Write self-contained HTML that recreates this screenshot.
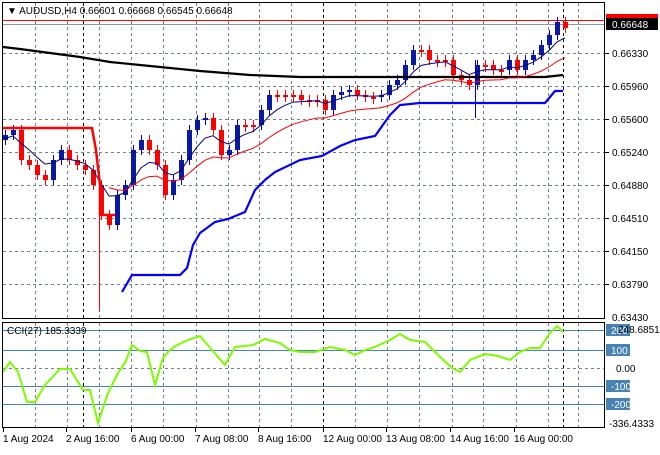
<!DOCTYPE html><html><head><style>
body{margin:0;background:#fff;width:660px;height:450px;overflow:hidden;font-family:"Liberation Sans",sans-serif}
svg text{font-family:"Liberation Sans",sans-serif;font-size:10px;fill:#000}
</style></head><body>
<svg id="s" width="660" height="450" xmlns="http://www.w3.org/2000/svg">
<rect x="0" y="0" width="660" height="450" fill="#fff"/>
<g id="grid"></g>
<g id="plot"></g>
<rect x="2.5" y="2.5" width="602" height="316" fill="none" stroke="#000"/>
<rect x="2.5" y="322.5" width="602" height="105" fill="none" stroke="#000"/>
<text x="7" y="14" font-size="10">▼ AUDUSD,H4  0.66601 0.66668 0.66545 0.66648</text>
<g id="axis"></g>
<text x="7" y="334">CCI(27) 185.3339</text>
</svg>
<script>
var NS="http://www.w3.org/2000/svg",g=document.getElementById('grid'),p=document.getElementById('plot'),ax=document.getElementById('axis');
function el(par,t,a){var e=document.createElementNS(NS,t);for(var k in a)e.setAttribute(k,a[k]);par.appendChild(e);return e}
var vx=[35,67,99,131,163,196,228,259,291,355,387,419,452,483,516,548,578];
vx.forEach(function(x){el(g,'line',{x1:x+.5,y1:3,x2:x+.5,y2:318,stroke:'#708090','stroke-dasharray':'3,3'});el(g,'line',{x1:x+.5,y1:323,x2:x+.5,y2:427,stroke:'#708090','stroke-dasharray':'3,3'})});
[83,323,563].forEach(function(x){el(g,'line',{x1:x+.5,y1:3,x2:x+.5,y2:318,stroke:'#000','stroke-dasharray':'3,3'});el(g,'line',{x1:x+.5,y1:323,x2:x+.5,y2:427,stroke:'#000','stroke-dasharray':'3,3'})});
var hy=[53,86,119,152,185,218,251,284],hl=['0.66330','0.65960','0.65600','0.65240','0.64880','0.64510','0.64150','0.63790'];
hy.forEach(function(y,i){el(g,'line',{x1:3,y1:y+.5,x2:604,y2:y+.5,stroke:'#708090','stroke-dasharray':'3,3'});el(ax,'line',{x1:605,y1:y+.5,x2:609,y2:y+.5,stroke:'#000'});var t=el(ax,'text',{x:612,y:y+4});t.textContent=hl[i]});
var t=el(ax,'text',{x:612,y:321});t.textContent='0.63430';
el(g,'line',{x1:3,y1:20.5,x2:604,y2:20.5,stroke:'#f00'});
el(g,'line',{x1:3,y1:24.5,x2:604,y2:24.5,stroke:'#8899aa'});
el(ax,'rect',{x:606,y:14,width:52,height:8,fill:'#f00'});
el(ax,'rect',{x:606,y:18,width:52,height:12,fill:'#000'});
t=el(ax,'text',{x:612,y:28,fill:'#fff',style:'fill:#fff'});t.textContent='0.66648';
// CCI levels
[[330,'200'],[350,'100'],[386,'-100'],[404,'-200']].forEach(function(a){el(g,'line',{x1:3,y1:a[0]+.5,x2:604,y2:a[0]+.5,stroke:'#4682b4'});el(ax,'rect',{x:606,y:a[0]-6,width:24,height:12,fill:'#4682b4'});var t=el(ax,'text',{x:611,y:a[0]+4,style:'fill:#fff'});t.textContent=a[1]});
el(g,'line',{x1:3,y1:368.5,x2:604,y2:368.5,stroke:'#708090','stroke-dasharray':'3,3'});
t=el(ax,'text',{x:616,y:372});t.textContent='0.00';
t=el(ax,'text',{x:618,y:333});t.textContent='248.6851';
t=el(ax,'text',{x:609,y:427});t.textContent='-336.4333';
[[3,'1 Aug 2024'],[66,'2 Aug 16:00'],[131,'6 Aug 00:00'],[195,'7 Aug 08:00'],[258,'8 Aug 16:00'],[323,'12 Aug 00:00'],[386,'13 Aug 08:00'],[450,'14 Aug 16:00'],[514,'16 Aug 00:00']].forEach(function(a){el(ax,'line',{x1:a[0]+.5,y1:428,x2:a[0]+.5,y2:432,stroke:'#000'});var t=el(ax,'text',{x:a[0],y:442});t.textContent=a[1]});
// candles
var c=[135,130,160,165,175,180,160,150,160,165,170,185,215,225,195,185,150,140,150,165,195,180,160,130,120,118,130,155,150,125,125,125,110,95,95,95,95,100,100,100,110,95,92,90,95,97,97,95,85,80,65,50,50,60,60,60,75,80,85,65,65,70,70,60,70,60,55,45,35,22,28];
var o=140;
c.forEach(function(cl,i){var x=5+i*8;var up=cl<o;var top=Math.min(o,cl),bot=Math.max(o,cl);if(bot-top<2)bot=top+2;var col=up?'#0a1aa0':'#f00';
el(p,'line',{x1:x+.5,y1:top-5,x2:x+.5,y2:bot+5,stroke:up?'#0000cd':'#f00'});
el(p,'rect',{x:x-2,y:top,width:5,height:bot-top,fill:col});o=cl});
el(p,'line',{x1:99.5,y1:200,x2:99.5,y2:311,stroke:'#f00'});
el(p,'line',{x1:475.5,y1:60,x2:475.5,y2:118,stroke:'#0000cd'});
function pl(pts,col,w){el(p,'polyline',{points:pts.map(function(a){return a.join(',')}).join(' '),fill:'none',stroke:col,'stroke-width':w})}
pl([[3,47],[20,49],[50,53],[80,57],[110,62],[140,65],[170,68],[200,71],[250,75],[300,77],[330,77],[400,77],[500,77],[545,77],[563,75]],'#000',2.2);
// blue thin ma
var bm=[],s=140;c.forEach(function(v,i){s=s*0.7+v*0.3;bm.push([5+i*8,s.toFixed(1)])});pl(bm,'#000080',1);
var rm=[],r=150;c.forEach(function(v,i){r=r*0.85+v*0.15;if(i>12)rm.push([5+i*8,(r+8).toFixed(1)])});pl(rm,'#f00',1);
pl([[3,128],[92,128],[96,150],[100,185],[100,215],[115,215]],'#f00',2.5);
pl([[122,292],[132,275],[180,275],[187,268],[193,245],[200,233],[215,222],[228,219],[245,212],[255,190],[265,180],[275,172],[300,160],[322,156],[340,146],[355,140],[375,136],[390,115],[400,105],[420,103],[545,103],[555,91],[563,91]],'#0000ff',2.2);
pl([[3,372],[10,362],[18,372],[27,402],[35,402],[45,385],[60,369],[70,369],[83,390],[90,390],[98,423],[108,393],[118,373],[125,363],[132,345],[140,351],[147,352],[155,385],[163,358],[170,350],[177,345],[188,340],[200,336],[212,350],[225,365],[235,347],[245,346],[253,345],[265,339],[280,343],[290,350],[300,352],[315,352],[330,347],[345,350],[355,355],[365,350],[375,347],[390,340],[400,334],[410,340],[425,342],[438,355],[452,368],[460,372],[470,360],[485,354],[498,356],[510,360],[520,352],[530,348],[540,348],[550,333],[557,326],[563,332]],'#7cfc00',2);
</script>
</body></html>
